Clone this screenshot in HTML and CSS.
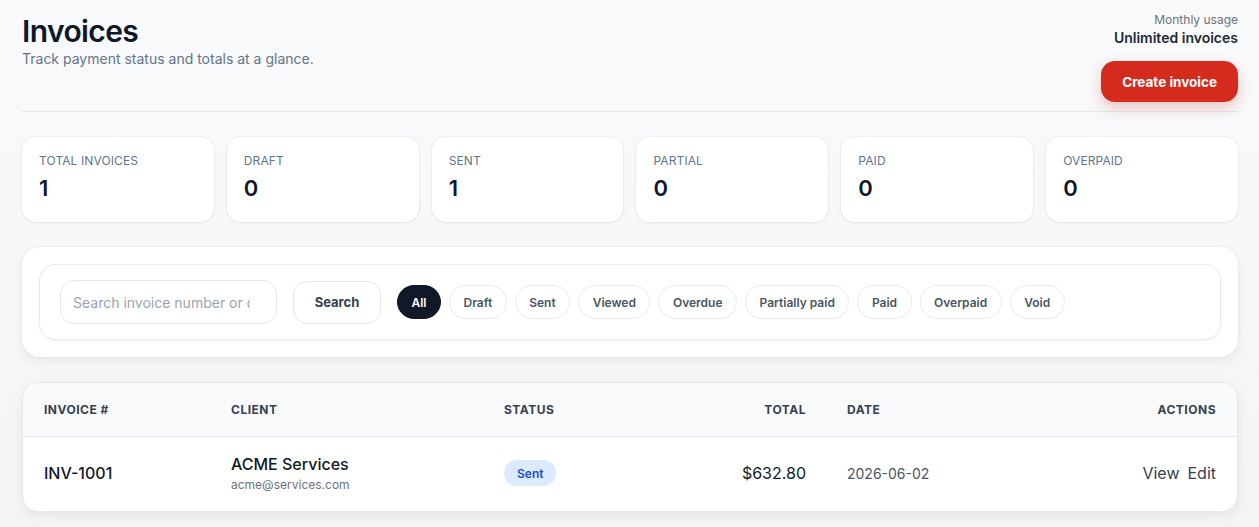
FILE: index.html
```html
<!DOCTYPE html>
<html lang="en">
<head>
<meta charset="utf-8">
<title>Invoices</title>
<link rel="stylesheet" href="styles.css">
</head>
<body>
<div class="page">
  <header class="head">
    <div class="head-left">
      <h1 class="title">Invoices</h1>
      <p class="subtitle">Track payment status and totals at a glance.</p>
    </div>
    <div class="head-right">
      <div class="usage-label">Monthly usage</div>
      <div class="usage-value">Unlimited invoices</div>
      <button class="btn-create">Create invoice</button>
    </div>
  </header>
  <hr class="divider">
  <section class="stats">
    <div class="stat"><div class="stat-label">Total invoices</div><div class="stat-value">1</div></div>
    <div class="stat"><div class="stat-label">Draft</div><div class="stat-value">0</div></div>
    <div class="stat"><div class="stat-label">Sent</div><div class="stat-value">1</div></div>
    <div class="stat"><div class="stat-label">Partial</div><div class="stat-value">0</div></div>
    <div class="stat"><div class="stat-label">Paid</div><div class="stat-value">0</div></div>
    <div class="stat"><div class="stat-label">Overpaid</div><div class="stat-value">0</div></div>
  </section>
  <section class="filters">
    <div class="filters-inner">
      <input class="search-input" type="text" placeholder="Search invoice number or client">
      <button class="btn-search">Search</button>
      <div class="chips">
        <span class="chip active">All</span>
        <span class="chip">Draft</span>
        <span class="chip">Sent</span>
        <span class="chip">Viewed</span>
        <span class="chip">Overdue</span>
        <span class="chip">Partially paid</span>
        <span class="chip">Paid</span>
        <span class="chip">Overpaid</span>
        <span class="chip">Void</span>
      </div>
    </div>
  </section>
  <section class="table">
    <div class="row row-head">
      <div>Invoice #</div>
      <div>Client</div>
      <div>Status</div>
      <div class="right">Total</div>
      <div class="date-col">Date</div>
      <div class="right">Actions</div>
    </div>
    <div class="row row-body">
      <div class="inv-no">INV-1001</div>
      <div class="client">
        <div class="client-name">ACME Services</div>
        <div class="client-email">acme@services.com</div>
      </div>
      <div><span class="badge">Sent</span></div>
      <div class="right total">$632.80</div>
      <div class="date-col date">2026-06-02</div>
      <div class="right actions"><a class="action">View</a><a class="action">Edit</a></div>
    </div>
  </section>
</div>
</body>
</html>
```

FILE: styles.css
```css
* { box-sizing: border-box; }
html, body { margin: 0; padding: 0; }
body {
  font-family: Inter, "Noto Sans", sans-serif;
  background: linear-gradient(180deg, #f9fafb 0%, #f3f4f6 100%);
  color: #111827;
  min-height: 527px;
}
.page { padding: 0 21px 0 22px; }
.head { display: flex; justify-content: space-between; align-items: flex-start; }
.head-left { padding-top: 13px; }
.title { margin: 0; font-size: 30px; line-height: 36px; font-weight: 600; letter-spacing: -0.6px; color: #0f172a; }
.subtitle { margin: 1px 0 0; font-size: 14px; line-height: 18px; color: #64748b; }
.head-right { display: flex; flex-direction: column; align-items: flex-end; padding-top: 12px; }
.usage-label { font-size: 12px; line-height: 16px; color: #6b7280; }
.usage-value { font-size: 14px; line-height: 20px; font-weight: 600; color: #1f2937; margin-top: 0; }
.btn-create {
  margin-top: 13px; height: 41px; padding: 0 21px; border: none; border-radius: 14px;
  background: #d52b1e; color: #fff; font-family: inherit; font-size: 13.5px; font-weight: 700;
  box-shadow: 0 6px 14px rgba(213, 43, 30, 0.25);
}
.divider { border: none; border-top: 1px solid #e5e7eb; margin: 9px 0 25px; }
.stats { display: grid; grid-template-columns: repeat(6, 1fr); gap: 13px; }
.stat {
  background: #fff; border-radius: 14px; height: 85px; padding: 17px 17px;
  box-shadow: 0 1px 3px rgba(15, 23, 42, 0.06), 0 0 0 1px rgba(15, 23, 42, 0.03);
}
.stat-label { font-size: 12px; line-height: 14px; text-transform: uppercase; color: #64748b; letter-spacing: 0.1px; }
.stat-value { font-size: 22px; line-height: 28px; font-weight: 600; color: #0f172a; margin-top: 6px; }
.filters {
  margin-top: 25px; background: #fff; border-radius: 18px; padding: 17px;
  box-shadow: 0 4px 12px rgba(15, 23, 42, 0.06), 0 0 0 1px rgba(15, 23, 42, 0.03);
}
.filters-inner {
  border: 1px solid #e8eaee; border-radius: 16px; padding: 15px 20px; display: flex; align-items: center; gap: 16px;
  box-shadow: 0 1px 3px rgba(15, 23, 42, 0.05);
}
.search-input {
  width: 217px; height: 44px; border: 1px solid #e5e7eb; border-radius: 14px; padding: 0 26px 0 12px;
  font-family: inherit; font-size: 14px; color: #111827; background: #fff; outline: none;
}
.search-input::placeholder { color: #9ca3af; }
.btn-search {
  height: 43px; width: 88px; border: 1px solid #e5e7eb; border-radius: 14px; background: #fff;
  font-family: inherit; font-size: 13px; font-weight: 700; color: #374151;
}
.chips { display: flex; gap: 8px; align-items: center; }
.chip {
  display: inline-flex; align-items: center; height: 34px; padding: 0 13.5px; border: 1px solid #e8eaee; border-radius: 17px;
  font-size: 12px; font-weight: 600; color: #4b5563; background: #fff;
}
.chip.active { background: #111827; border-color: #111827; color: #fff; }
.table {
  margin-top: 25px; background: #fff; border-radius: 16px; overflow: hidden;
  border: 1px solid #e5e7eb;
  box-shadow: 0 4px 12px rgba(15, 23, 42, 0.06);
}
.row {
  display: grid; grid-template-columns: 187px 273px 182px 120px 1fr 200px; padding: 0 21px; align-items: center;
}
.row-head {
  height: 54px; background: #f8fafc; border-bottom: 1px solid #e5e7eb;
  font-size: 12px; font-weight: 700; text-transform: uppercase; letter-spacing: 0.5px; color: #374151;
}
.row-body { height: 74px; padding-bottom: 2px; }
.right { text-align: right; }
.date-col { padding-left: 41px; }
.inv-no { font-size: 16px; font-weight: 500; color: #111827; }
.client-name { font-size: 16px; font-weight: 500; line-height: 20px; color: #111827; }
.client-email { font-size: 12px; line-height: 16px; color: #6b7280; margin-top: 3px; }
.badge {
  display: inline-flex; align-items: center; height: 26px; padding: 0 13px; border-radius: 13px;
  background: #dbeafe; color: #1d4ed8; font-size: 12px; font-weight: 600;
}
.total { font-size: 16px; color: #111827; }
.date { font-size: 14px; color: #4b5563; }
.actions { font-size: 16px; color: #374151; }
.action { margin-left: 8px; }
```
